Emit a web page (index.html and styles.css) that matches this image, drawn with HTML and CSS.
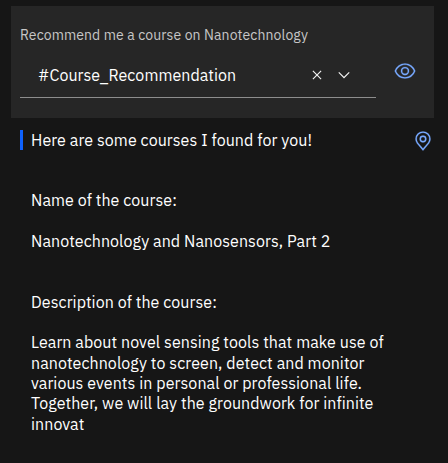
FILE: index.html
```html
<!DOCTYPE html>
<html lang="en"><head><meta charset="utf-8"><title>Try it out</title><link rel="stylesheet" href="styles.css"></head>
<body>
<main class="chat">
<section class="query">
<p class="question">Recommend me a course on Nanotechnology</p>
<div class="row">
<div class="select"><span class="value">#Course_Recommendation</span>
<svg class="clear" width="18" height="18" viewBox="0 0 32 32"><path d="M24 9.4 22.6 8 16 14.6 9.4 8 8 9.4l6.6 6.6L8 22.6 9.4 24l6.6-6.6 6.6 6.6 1.4-1.4-6.6-6.6z"/></svg>
<svg class="chev" width="18" height="18" viewBox="0 0 16 16"><path d="M8 11 3 6l.7-.7L8 9.6l4.3-4.3.7.7z"/></svg></div>
<svg class="eye" width="22" height="22" viewBox="0 0 32 32"><path d="M30.94 15.66A16.69 16.69 0 0 0 16 5 16.69 16.69 0 0 0 1.06 15.66a1 1 0 0 0 0 .68A16.69 16.69 0 0 0 16 27a16.69 16.69 0 0 0 14.94-10.66 1 1 0 0 0 0-.68zM16 25c-5.3 0-10.9-3.93-12.93-9C5.1 10.93 10.7 7 16 7s10.9 3.93 12.93 9C26.9 21.07 21.3 25 16 25z"/><path d="M16 10a6 6 0 1 0 6 6 6 6 0 0 0-6-6zm0 10a4 4 0 1 1 4-4 4 4 0 0 1-4 4z"/></svg>
</div>
</section>
<section class="reply">
<div class="lead"><p>Here are some courses I found for you!</p>
<svg class="pin" width="22" height="22" viewBox="0 0 32 32"><path d="M16 18a5 5 0 1 1 5-5 5 5 0 0 1-5 5zm0-8a3 3 0 1 0 3 3 3 3 0 0 0-3-3z"/><path d="m16 30-8.44-9.95c-.05-.06-.35-.45-.35-.45A10.9 10.9 0 0 1 5 13a11 11 0 0 1 22 0 10.9 10.9 0 0 1-2.21 6.6l-.35.45zM8.81 18.4s.23.31.29.37L16 26.91l6.91-8.15c.04-.05.28-.36.28-.36A8.9 8.9 0 0 0 25 13a9 9 0 1 0-18 0 8.9 8.9 0 0 0 1.81 5.4z"/></svg></div>
<p class="name">Name of the course:</p>
<p class="title">Nanotechnology and Nanosensors, Part 2</p>
<p class="desc">Description of the course:</p>
<p class="body">Learn about novel sensing tools that make use of<br>nanotechnology to screen, detect and monitor<br>various events in personal or professional life.<br>Together, we will lay the groundwork for infinite<br>innovat</p>
</section>
</main>
</body></html>
```
FILE: styles.css
```css
*{box-sizing:border-box}
body{margin:0;background:#161616;color:#fff;font:16px/20.4px "IBM Plex Sans","Noto Sans",sans-serif;letter-spacing:.07px}
p{margin:0;white-space:nowrap}
.chat{height:463px;padding:6px 14px 0 11px;overflow:hidden}
.query{height:112px;background:#262626;padding:19px 0 0 9px}
.question{font-size:14px;color:#c6c6c6;letter-spacing:.1px}
.row{display:flex}
.select{width:356px;height:47px;margin-top:6px;border-bottom:1px solid #8d8d8d;display:flex;align-items:center;padding:2px 0 0 18px}
.value{width:270px;letter-spacing:.05px}
.chev{margin-left:9px}
svg{display:block;fill:#f4f4f4;flex:none}
.eye,.pin{fill:#78a9ff;stroke:#78a9ff;stroke-width:.3}
.eye{margin:15px 0 0 18px}
.pin{margin-top:2px}
.lead{display:flex;justify-content:space-between;align-items:center;height:20px;margin:12px 0 0 9px;padding-left:8px;border-left:3px solid #0f62fe}
.name,.title,.desc,.body{margin-left:20px}
.name{margin-top:40.4px}
.title{margin-top:20.4px}
.desc{margin-top:40.4px}
.body{margin-top:20px;line-height:20.3px}
```
